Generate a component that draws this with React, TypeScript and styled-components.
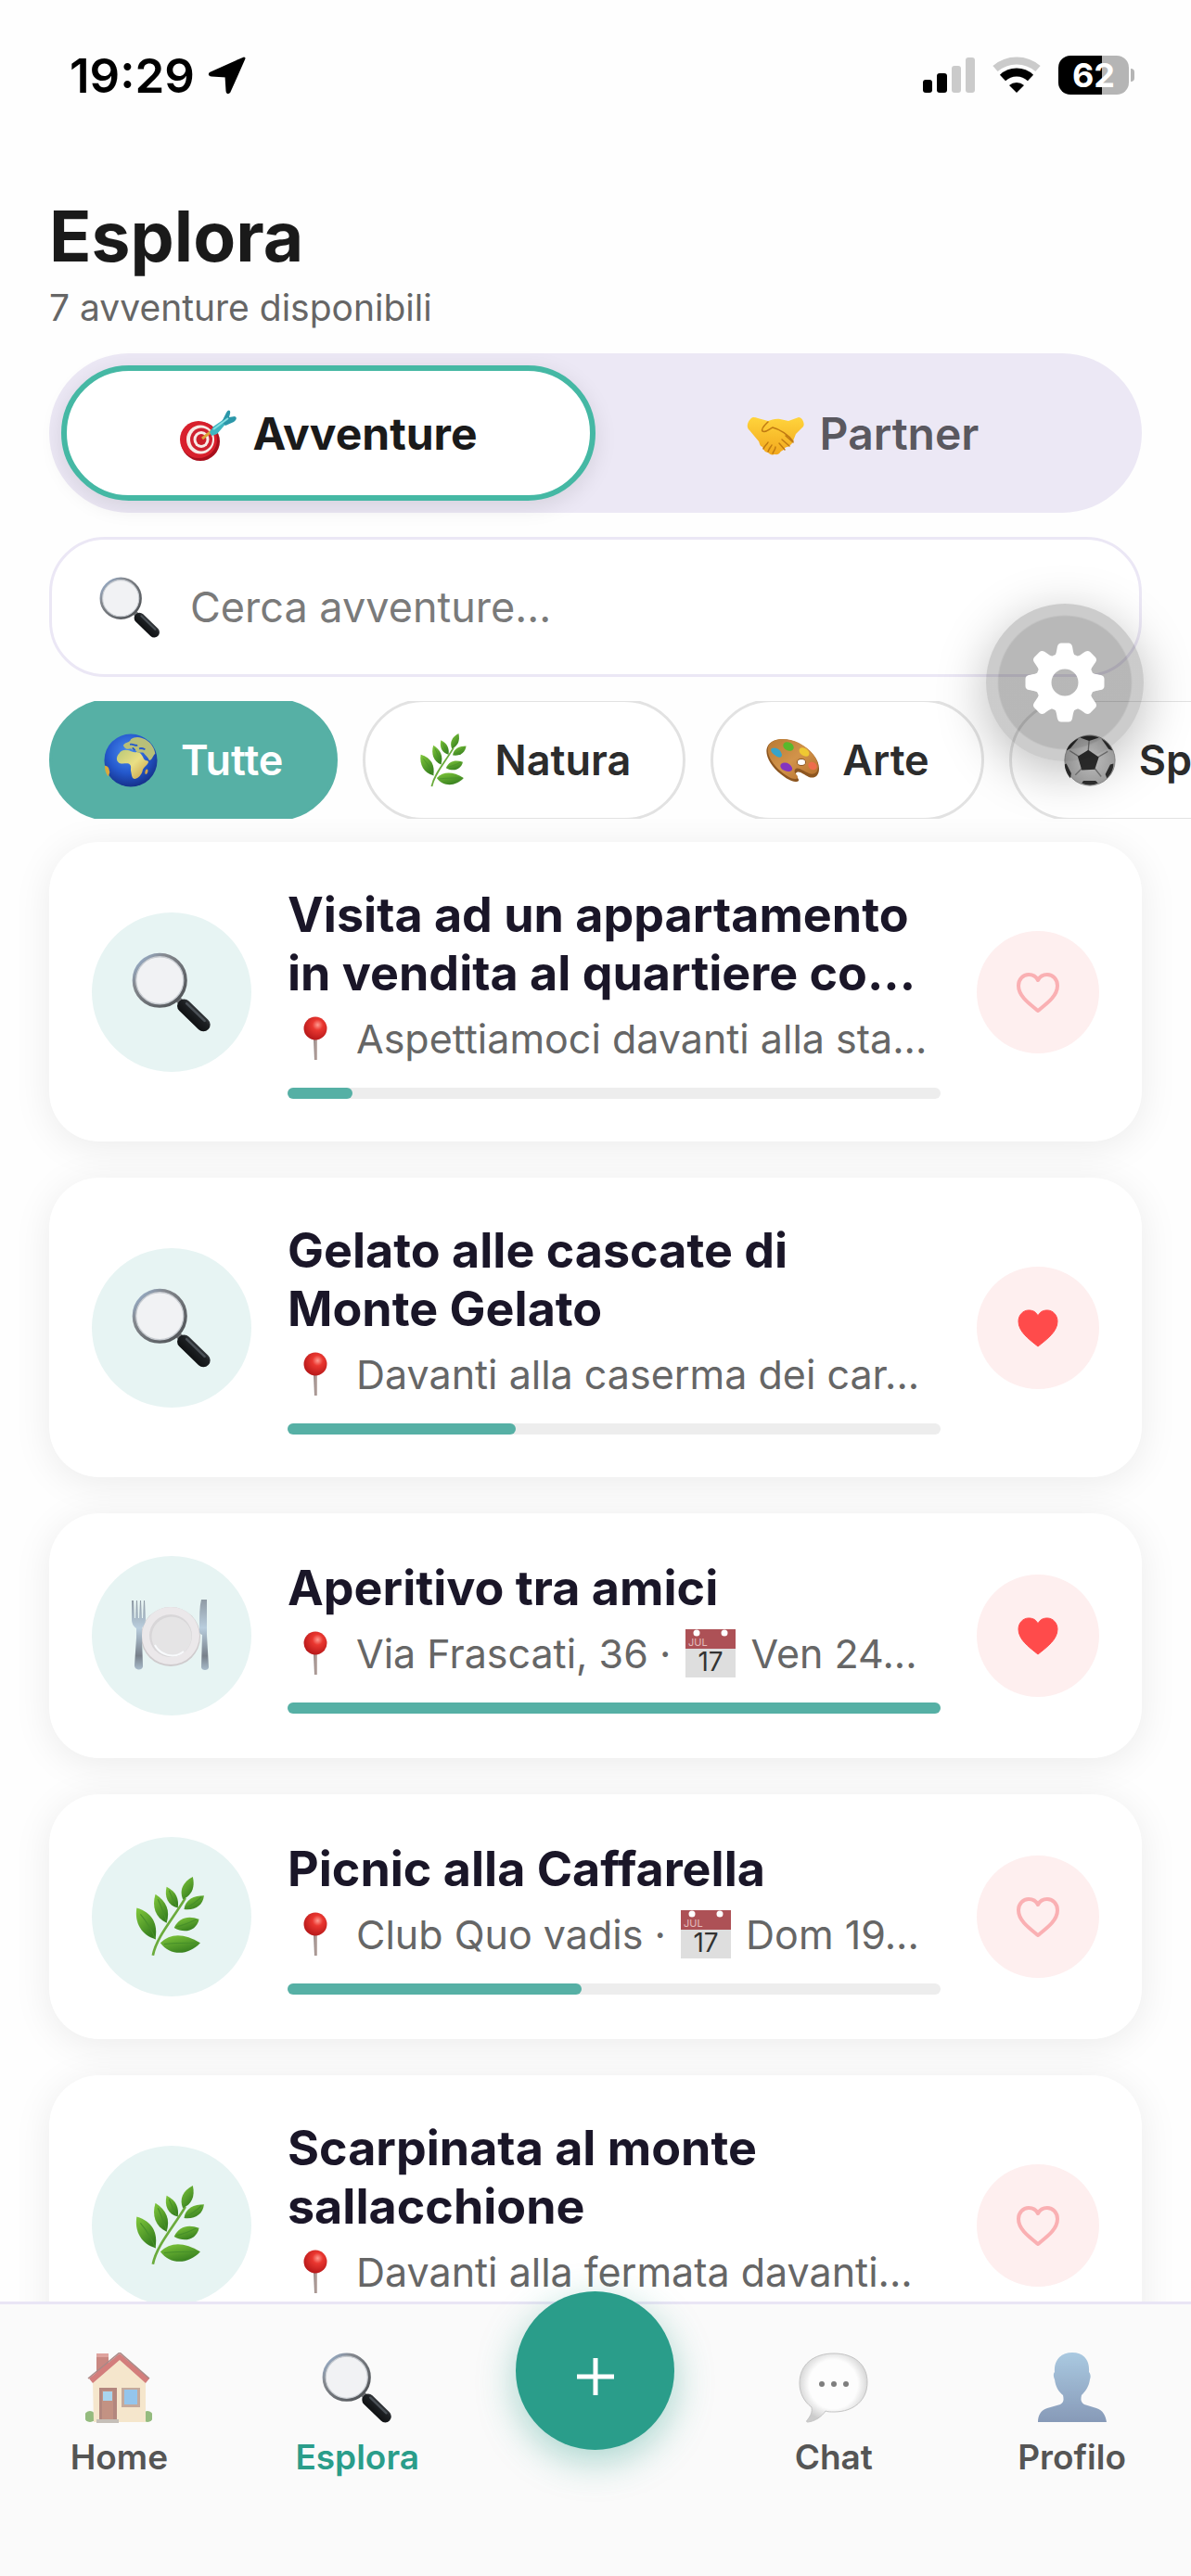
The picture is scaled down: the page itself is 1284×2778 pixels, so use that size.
import { ReactNode, useState } from 'react'
import styled, { createGlobalStyle, css } from 'styled-components'

const GlobalStyle = createGlobalStyle`
  * {
    box-sizing: border-box;
  }

  body {
    margin: 0;
    background: #fefefe;
    font-family: Inter, 'Liberation Sans', sans-serif;
  }

  h1, h2, p, ul {
    margin: 0;
    padding: 0;
  }

  button, input {
    font: inherit;
    color: inherit;
    border: none;
    background: none;
    padding: 0;
  }
`

const Screen = styled.div`
  display: flex;
  flex-direction: column;
  height: 100vh;
  overflow: hidden;
`

const StatusBar = styled.div`
  display: flex;
  align-items: center;
  justify-content: space-between;
  height: 112px;
  padding: 50px 61px 0 75px;
`

const StatusGroup = styled.div<{ $gap: number }>`
  display: flex;
  align-items: center;
  gap: ${({ $gap }) => $gap}px;
`

const Clock = styled.span`
  font-size: 51px;
  font-weight: 600;
  color: #000;
`

const Battery = styled.span`
  display: flex;
  align-items: center;
  justify-content: center;
  width: 76px;
  height: 42px;
  border-radius: 13px;
  background: linear-gradient(90deg, #000 62%, #b5b5b5 62%);
  color: #fff;
  font-size: 36px;
  font-weight: 700;
  line-height: 42px;
`

const BatteryWrap = styled.div`
  display: flex;
  align-items: center;
  gap: 2px;

  &::after {
    content: '';
    width: 4px;
    height: 14px;
    border-radius: 0 4px 4px 0;
    background: #b5b5b5;
  }
`

const Header = styled.header`
  display: flex;
  flex-direction: column;
  padding: 95px 53px 0;
`

const Title = styled.h1`
  font-size: 75px;
  font-weight: 700;
  line-height: 96px;
  color: #1a1a1a;
`

const Subtitle = styled.p`
  margin-top: 4px;
  font-size: 39px;
  line-height: 50px;
  color: #666;
`

const Segment = styled.div`
  display: grid;
  grid-template-columns: 1fr 1fr;
  margin-top: 24px;
  padding: 13px;
  border-radius: 86px;
  background: #ece8f5;
`

const SegmentTab = styled.button<{ $active: boolean }>`
  display: flex;
  align-items: center;
  justify-content: center;
  gap: 17px;
  height: 146px;
  border: 6px solid transparent;
  border-radius: 73px;
  color: #5a585f;
  font-size: 48px;
  font-weight: 600;

  ${({ $active }) =>
    $active &&
    css`
      border-color: #45b8a4;
      background: #fff;
      box-shadow: 0 6px 24px rgba(0, 0, 0, 0.1);
      color: #1a1a1a;
      font-weight: 700;
    `}
`

const SearchBox = styled.label`
  display: flex;
  align-items: center;
  gap: 32px;
  height: 151px;
  margin-top: 26px;
  padding: 0 51px;
  border: 3px solid #ebe7f5;
  border-radius: 60px;
  background: #fff;
`

const SearchInput = styled.input`
  flex: 1;
  min-width: 0;
  font-size: 45px;
  outline: none;
  color: #1a1a1a;

  &::placeholder {
    color: #7a7a7a;
    opacity: 1;
  }
`

const Filters = styled.div`
  position: relative;
  margin-top: 26px;
`

const ChipRow = styled.div`
  display: flex;
  align-items: center;
  gap: 27px;
  height: 127px;
  padding-left: 53px;
  overflow: hidden;
`

const Chip = styled.button<{ $active: boolean }>`
  display: flex;
  flex-shrink: 0;
  align-items: center;
  gap: 25px;
  height: 131px;
  padding: 0 56px;
  border: 3px solid ${({ $active }) => ($active ? '#56b0a5' : '#e2e2e2')};
  border-radius: 66px;
  background: ${({ $active }) => ($active ? '#56b0a5' : '#fff')};
  color: ${({ $active }) => ($active ? '#fff' : '#2c2c2c')};
  font-size: 45px;
  font-weight: 600;
`

/* floats over the search box and the filters */
const SettingsButton = styled.button`
  position: absolute;
  top: -105px;
  right: 51px;
  display: flex;
  align-items: center;
  justify-content: center;
  width: 170px;
  height: 170px;
  border-radius: 50%;
  background: radial-gradient(circle, rgba(0, 0, 0, 0.28) 71px, rgba(0, 0, 0, 0.2) 73px);
  box-shadow: 0 12px 54px rgba(0, 0, 0, 0.26);
`

const List = styled.ul`
  display: flex;
  flex: 1;
  flex-direction: column;
  gap: 39px;
  min-height: 0;
  padding: 25px 53px 40px;
  overflow-y: auto;
  list-style: none;
  scrollbar-width: none;
`

const Card = styled.li`
  display: flex;
  flex-shrink: 0;
  align-items: center;
  gap: 39px;
  padding: 46px;
  border-radius: 54px;
  background: #fff;
  box-shadow: 0 6px 42px rgba(0, 0, 0, 0.08);
`

const CardIcon = styled.div`
  display: flex;
  flex-shrink: 0;
  align-items: center;
  justify-content: center;
  width: 172px;
  height: 172px;
  border-radius: 50%;
  background: #e7f4f3;
`

const CardBody = styled.div`
  flex: 1;
  min-width: 0;
  padding-top: 1px;
`

const CardTitle = styled.h2`
  font-size: 52px;
  font-weight: 700;
  line-height: 63px;
  color: #1a1628;
  white-space: pre-line;
`

const CardPlace = styled.p`
  height: 57px;
  margin-top: 11px;
  font-size: 43px;
  line-height: 57px;
  color: #666;
  white-space: nowrap;
`

const PinSvg = styled.svg`
  margin: 0 31px 0 17px;
  vertical-align: -8px;
`

const CalendarSvg = styled.svg`
  margin: 0 4px;
  vertical-align: -10px;
`

const Track = styled.div`
  height: 12px;
  margin-top: 24px;
  border-radius: 6px;
  background: #ededed;
`

const Fill = styled.div`
  height: 100%;
  border-radius: 6px;
  background: #56b0a5;
`

const HeartButton = styled.button`
  display: flex;
  flex-shrink: 0;
  align-items: center;
  justify-content: center;
  width: 132px;
  height: 132px;
  border-radius: 50%;
  background: #feefef;
`

const Nav = styled.nav`
  position: relative;
  display: grid;
  grid-template-columns: repeat(5, 1fr);
  height: 296px;
  border-top: 3px solid #e9e5f5;
  background: #fafafa;
`

const NavLink = styled.a<{ $active?: boolean }>`
  display: flex;
  flex-direction: column;
  align-items: center;
  gap: 14px;
  padding-top: 52px;
  color: ${({ $active }) => ($active ? '#2a9d8a' : '#555')};
  font-size: 37px;
  font-weight: 600;
  line-height: 46px;
  text-decoration: none;

  svg {
    opacity: ${({ $active }) => ($active ? 1 : 0.65)};
  }
`

const AddButton = styled.button`
  display: flex;
  align-items: center;
  justify-content: center;
  justify-self: center;
  width: 171px;
  height: 171px;
  margin-top: -14px;
  padding-top: 12px;
  border-radius: 50%;
  background: #2a9d8a;
  box-shadow: 0 12px 42px rgba(42, 157, 138, 0.4);
`

const HiddenSvg = styled.svg`
  position: absolute;
`

/* shared gradients for the pictograms */
function Gradients() {
  return (
    <HiddenSvg width="0" height="0" aria-hidden="true">
      <defs>
        <linearGradient id="lens" x1="0" y1="0" x2="1" y2="1">
          <stop offset="0" stopColor="#9db9dc" />
          <stop offset="0.3" stopColor="#85898f" />
          <stop offset="1" stopColor="#4a4d50" />
        </linearGradient>
        <linearGradient id="handle" x1="1" y1="0" x2="0" y2="1">
          <stop offset="0" stopColor="#5a5e62" />
          <stop offset="0.4" stopColor="#1d2023" />
          <stop offset="1" stopColor="#060708" />
        </linearGradient>
        <radialGradient id="sea" cx="0.45" cy="0.35" r="0.65">
          <stop offset="0" stopColor="#4a8cf0" />
          <stop offset="0.6" stopColor="#2458cc" />
          <stop offset="1" stopColor="#16328c" />
        </radialGradient>
        <linearGradient id="land" x1="0" y1="0" x2="1" y2="1">
          <stop offset="0" stopColor="#b9c878" />
          <stop offset="0.5" stopColor="#eadf84" />
          <stop offset="1" stopColor="#c79b45" />
        </linearGradient>
        <linearGradient id="leaf" x1="0" y1="0" x2="0.6" y2="1">
          <stop offset="0" stopColor="#82c93c" />
          <stop offset="1" stopColor="#37801f" />
        </linearGradient>
        <radialGradient id="pinHead" cx="0.6" cy="0.35" r="0.65">
          <stop offset="0" stopColor="#ff9a90" />
          <stop offset="0.35" stopColor="#ea3730" />
          <stop offset="1" stopColor="#b8191a" />
        </radialGradient>
        <linearGradient id="pinStick" x1="0" y1="0" x2="1" y2="0">
          <stop offset="0" stopColor="#8c7b78" />
          <stop offset="1" stopColor="#c4b4b0" />
        </linearGradient>
        <linearGradient id="wood" x1="0" y1="0" x2="1" y2="1">
          <stop offset="0" stopColor="#b87a34" />
          <stop offset="0.5" stopColor="#d2934a" />
          <stop offset="1" stopColor="#b36e2b" />
        </linearGradient>
        <linearGradient id="hand" x1="0" y1="0" x2="0" y2="1">
          <stop offset="0" stopColor="#ffd43c" />
          <stop offset="1" stopColor="#f2a81d" />
        </linearGradient>
        <radialGradient id="ball" cx="0.5" cy="0.4" r="0.6">
          <stop offset="0" stopColor="#e2e2e2" />
          <stop offset="1" stopColor="#a2a2a2" />
        </radialGradient>
        <linearGradient id="steel" x1="0" y1="0" x2="0" y2="1">
          <stop offset="0" stopColor="#8f9aa4" />
          <stop offset="0.4" stopColor="#b9cddd" />
          <stop offset="0.8" stopColor="#77808a" />
          <stop offset="1" stopColor="#a9bccb" />
        </linearGradient>
        <linearGradient id="bust" x1="0" y1="0" x2="0" y2="1">
          <stop offset="0" stopColor="#80b0d4" />
          <stop offset="1" stopColor="#4a6795" />
        </linearGradient>
        <radialGradient id="bubble" cx="0.5" cy="0.45" r="0.55">
          <stop offset="0.65" stopColor="#ffffff" />
          <stop offset="1" stopColor="#b4b4b4" />
        </radialGradient>
      </defs>
    </HiddenSvg>
  )
}

function Magnifier({ size }: { size: number }) {
  return (
    <svg width={size} height={size} viewBox="0 0 64 64" aria-hidden="true">
      <path d="M37 37.500 41 41.500" stroke="#77797c" strokeWidth="5" />
      <path d="M42 43 57.500 58" stroke="url(#handle)" strokeWidth="11" strokeLinecap="round" />
      <path d="M44 41 58.500 55" stroke="#4b5157" strokeWidth="2" strokeLinecap="round" />
      <circle cx="22.500" cy="22.500" r="20.500" fill="#f1f2f4" stroke="url(#lens)" strokeWidth="3" />
      <circle cx="22.500" cy="22.500" r="19" fill="none" stroke="#c9cdd2" strokeWidth="1" />
    </svg>
  )
}

function Herb({ size }: { size: number }) {
  return (
    <svg width={size} height={size} viewBox="0 0 64 64" fill="url(#leaf)" aria-hidden="true">
      <path d="M17 63C20 48 33 34 43 17" fill="none" stroke="#6bab3c" strokeWidth="2" />
      <path d="M49 0c2 9-1 15-8 18-3-7 0-14 8-18Z" />
      <path d="M28 8c8 4 10 10 9 17-8-2-11-9-9-17Z" />
      <path d="M58 15c-1 8-7 12-16 11 1-8 8-11 16-11Z" />
      <path d="M19 14c9 6 12 13 9 23-9-4-12-13-9-23Z" />
      <path d="M34 41c4-9 12-10 20-7-2 9-11 12-20 7Z" />
      <path d="M4 25c13 4 17 13 15 25C8 47 2 37 4 25Z" />
      <path d="M23 53c8-8 19-8 32 0-9 10-24 11-32 0Z" />
      <path d="M7 30c5 6 9 12 12 20M26 54c8-1 18-1 26-1M21 18c3 6 5 12 7 18M36 40c5-1 10-3 16-6M30 11c2 5 4 9 6 13M43 25c5-2 9-5 13-9" fill="none" stroke="#47902a" strokeWidth="0.800" />
    </svg>
  )
}

function Globe() {
  return (
    <svg width="58" height="58" viewBox="0 0 64 64" aria-hidden="true">
      <circle cx="32" cy="32" r="31.500" fill="url(#sea)" />
      <path
        d="M18 24c2-5 8-5 12-4 3 1 5 3 9 2 5 0 7 5 9 9 2 2 5 1 5 3-1 4-6 6-7 10-1 5-5 9-9 10-4 0-4-6-5-10 0-4 1-6-2-8-4-1-8 1-12-1-4-3-3-8 0-11Z"
        fill="url(#land)"
      />
      <path d="M23 14c3-4 8-3 9-7 5-4 12-3 17 0 7 4 11 10 12 17-3 3-4 8-7 8-2-4-4-5-7-9-3-1-5 1-8-1 0-3-5-1-7-4-3 1-7 1-9-4Z" fill="#b8bf79" />
      <path d="M31 13c4-1 6 2 9 1M34 17l3 3M42 18c3-1 5 0 7 1" fill="none" stroke="#2458cc" strokeWidth="2" />
      <path d="M1 38c5 1 5 4 6 8-1 3-1 4-2 5-3-4-4-8-4-13Z" fill="#d9a93d" />
      <path d="M50 43c3-2 3 3 1 5-2 2-3-2-1-5Z" fill="#d3a44a" />
    </svg>
  )
}

function Palette() {
  return (
    <svg width="58" height="46" viewBox="0 0 58 46" aria-hidden="true">
      <path
        d="M3 7C9-2 25-1 37 5c13 7 21 17 21 27 0 8-5 11-11 9-6-3-11-8-14-4-2 3 4 5 3 8-3 3-12-1-19-7C5 29-2 15 3 7Z"
        fill="#8d5620"
      />
      <path
        d="M4 6C10-2 25-1 36 4c13 7 20 16 21 25 0 8-5 10-10 8-7-3-12-8-15-4-2 4 4 6 3 9-3 3-11-1-18-7C6 26 0 14 4 6Z"
        fill="url(#wood)"
      />
      <ellipse cx="39" cy="25" rx="4.500" ry="3.500" fill="#fff" stroke="#8d5620" />
      <path d="M7 10c4-2 10 1 11 7 0 4-5 3-8 0-3-2-5-5-3-7Z" fill="#37a4c9" />
      <ellipse cx="25" cy="8" rx="6" ry="4.500" fill="#58b82c" transform="rotate(25 25 8)" />
      <ellipse cx="42" cy="14" rx="6" ry="4" fill="#efc832" transform="rotate(35 42 14)" />
      <ellipse cx="51" cy="29" rx="5" ry="4" fill="#ee6d4b" transform="rotate(35 51 29)" />
      <path d="M17 27c4-3 10-1 12 4 1 4-4 5-8 3-3-1-6-4-4-7Z" fill="#8434c0" />
    </svg>
  )
}

function SoccerBall() {
  return (
    <svg width="56" height="56" viewBox="0 0 64 64" aria-hidden="true">
      <circle cx="32" cy="32" r="31" fill="url(#ball)" stroke="#8d8d8d" />
      <g stroke="#777" strokeWidth="1.500" fill="none">
        <path d="M30 20 31 8M42 28 54 21M38 42 46 52M22 42 14 50M18 27 7 20" />
      </g>
      <g fill="#2f2f2f">
        <path d="m30 19 13 9-5 15-16 1-5-17Z" />
        <path d="M20 4c7-3 16-3 23 0l-12 4ZM46 5c6 3 11 8 14 15l-5-2ZM18 5C10 8 5 14 3 20l5-3ZM61 36c0 7-3 13-8 18l-2-5 6-12ZM3 36l6 12-1 6C4 49 1 43 1 37ZM24 57h15l3 3c-6 3-14 3-20 0Z" />
      </g>
    </svg>
  )
}

function Dart() {
  return (
    <svg width="62" height="60" viewBox="0 0 62 60" aria-hidden="true">
      <ellipse cx="23" cy="39" rx="21" ry="21" fill="#a80f1c" />
      <ellipse cx="21" cy="37" rx="20" ry="20" fill="#d8202c" />
      <ellipse cx="23" cy="37" rx="15" ry="15.500" fill="#f7ece7" />
      <ellipse cx="24" cy="37" rx="12" ry="12.500" fill="#cf2230" />
      <ellipse cx="24" cy="37" rx="8.500" ry="9" fill="#f7ece7" />
      <ellipse cx="24" cy="37" rx="5.500" ry="6" fill="#cb1f2a" />
      <path d="m25 36 10-8" stroke="#dca43a" strokeWidth="3" />
      <path d="m33 29 4-6 13-9 3 3-12 14-6 2Z" fill="#3fb5c0" />
      <path d="m46 18 5-10c2-4 5-3 4 1l-1 4 6-1c3 1 2 4-1 6l-9 4Z" fill="#2b97a9" />
      <path d="m37 26 16-12" stroke="#84e0e2" strokeWidth="2" />
    </svg>
  )
}

function Handshake() {
  return (
    <svg width="62" height="54" viewBox="0 0 62 54" aria-hidden="true">
      <path
        d="M4 12c2-3 5-2 8-1l11 3c4-1 8-3 13-2l9 2 11-4c4 0 7 7 5 10l-8 8-4 10c-3 4-6 4-8 5-1 3-4 3-5 5-2 3-5 2-6 2-3 1-5 0-7-2-3 0-5-3-6-6-3-1-3-4-4-6L3 24c-4-3-2-9 1-12Z"
        fill="url(#hand)"
      />
      <path
        d="M23 15c-3 3-8 7-6 10 4 2 8-3 11-4 8 2 17 8 22 15M18 44c1-3 4-5 5-7M23 47c1-3 3-5 4-7M28 49c1-3 3-4 3-7M35 38l6 7M38 34l8 7M42 30l8 7"
        fill="none"
        stroke="#c07a12"
        strokeWidth="1.500"
        strokeLinecap="round"
      />
    </svg>
  )
}

function PlateSetting() {
  return (
    <svg width="86" height="78" viewBox="1 0 86 78" aria-hidden="true">
      <circle cx="43" cy="40" r="32" fill="#cfcbcd" />
      <circle cx="43" cy="39" r="31" fill="#ebe8ea" />
      <circle cx="43" cy="39" r="23" fill="#d8d6d8" />
      <circle cx="44" cy="40" r="21.500" fill="#e5e4e5" />
      <path d="M26 49c5 10 20 16 31 7" fill="none" stroke="#f8fafc" strokeWidth="2" />
      <path
        d="M1 1h2l1 19h1L6 1h1l1 19h1l1-19h1l1 19h1l1-19h1l1 20c0 5-3 8-4 10v10l1 30c1 6-9 6-9 0l2-30V31c-3-2-5-5-5-10Z"
        fill="url(#steel)"
      />
      <path d="M76 0h6v38l2 35c0 4-8 4-8 0l1-35c-4-1-3-4-3-10 0-10 0-20 2-28Z" fill="url(#steel)" />
    </svg>
  )
}

function House() {
  return (
    <svg width="72" height="76" viewBox="0 0 72 76" aria-hidden="true">
      <circle cx="5" cy="69" r="6" fill="#5f9a3c" />
      <circle cx="67" cy="69" r="6" fill="#5f9a3c" />
      <path d="M12 1h13v24H12Z" fill="#b04a42" />
      <path d="M12 1h13v4H12Z" fill="#d1756d" />
      <path d="M8 31 37 3l28 28v44H9Z" fill="#f3dcb4" />
      <path d="m4 28 33-27 32 27-4 5L37 8 8 33Z" fill="#bf3c3a" />
      <path d="M3 28 37 0l32 28" fill="none" stroke="#7f4d49" strokeWidth="1.500" />
      <path d="M15 38h19v35H15Z" fill="#8e4a3c" />
      <path d="M18 41h12v32H18Z" fill="#a65b44" />
      <path d="M19 42h10v10H19Z" fill="#7fc2e8" />
      <path d="M39 38h20v21H39Z" fill="#a8806a" />
      <path d="M42 40h14v16H42Z" fill="#5fa9e6" />
      <path d="M12 72h24v4H12Z" fill="#aaa196" />
    </svg>
  )
}

function ChatBubble() {
  return (
    <svg width="76" height="76" viewBox="0 0 76 76" aria-hidden="true">
      <path
        d="M38 1c22 0 36 12 36 31S60 64 38 64c-3 0-7 0-9-1-4 6-11 11-19 12-2 0-2-1 0-3 3-4 5-8 4-13C6 53 1 44 1 33 1 13 16 1 38 1Z"
        fill="url(#bubble)"
        stroke="#a8a8a8"
      />
      <g fill="#3d3d3d">
        <circle cx="25" cy="34" r="3" />
        <circle cx="38" cy="34" r="3" />
        <circle cx="51" cy="34" r="3" />
      </g>
    </svg>
  )
}

function Bust() {
  return (
    <svg width="76" height="76" viewBox="0 0 76 76" aria-hidden="true">
      <path
        d="M38 0c12 0 19 8 18 21 2 2 2 6 1 8-1 8-5 13-9 17-1 5-1 7 3 10l13 4c7 2 10 8 11 15H1c0-7 3-13 10-15l14-4c4-2 4-5 3-10-5-4-8-9-9-17-1-2-2-6 0-8C18 8 26 0 38 0Z"
        fill="url(#bust)"
      />
    </svg>
  )
}

function Pin() {
  return (
    <PinSvg width="26" height="48" viewBox="0 0 26 48" aria-hidden="true">
      <path d="M11 23h4v24h-3Z" fill="url(#pinStick)" />
      <circle cx="13" cy="13" r="12.500" fill="url(#pinHead)" />
    </PinSvg>
  )
}

function Calendar() {
  return (
    <CalendarSvg width="54" height="52" viewBox="0 0 54 52" aria-hidden="true">
      <rect width="54" height="52" fill="#dedede" />
      <rect width="54" height="21" fill="#ad5156" />
      <circle cx="12" cy="4" r="3.500" fill="#fff" />
      <circle cx="42" cy="4" r="3.500" fill="#fff" />
      <text x="3" y="18" fontSize="11" fill="#e4bcbc">JUL</text>
      <text x="27" y="45" fontSize="28" fontWeight="400" textAnchor="middle" fill="#333">17</text>
    </CalendarSvg>
  )
}

function Heart({ filled }: { filled: boolean }) {
  return (
    <svg width="48" height="44" viewBox="0 0 48 44" aria-hidden="true">
      <path
        d="M24 42C14 34 3 26 3 15 3 8 8 3 14 3c5 0 8 2 10 6 2-4 5-6 10-6 6 0 11 5 11 12 0 11-11 19-21 27Z"
        fill={filled ? '#ff4b4b' : 'none'}
        stroke={filled ? '#ff4b4b' : '#fab0b3'}
        strokeWidth={filled ? 1 : 4}
        strokeLinejoin="round"
      />
    </svg>
  )
}

const teeth = [0, 45, 90, 135, 180, 225, 270, 315]

function Gear() {
  return (
    <svg width="86" height="86" viewBox="-43 -43 86 86" aria-hidden="true">
      <circle r="23" fill="none" stroke="#fff" strokeWidth="17" />
      {teeth.map((angle) => (
        <path
          key={angle}
          d="M-13 -26C-9 -30 -9 -34 -8 -39Q-7 -42.500 -4 -42.500H4Q7 -42.500 8 -39C9 -34 9 -30 13 -26Z"
          fill="#fff"
          transform={`rotate(${angle})`}
        />
      ))}
    </svg>
  )
}

interface IAdventure {
  id: number
  icon: ReactNode
  title: string
  place: string
  date?: string
  progress: number
  liked: boolean
}

const adventures: IAdventure[] = [
  {
    id: 1,
    icon: <Magnifier size={86} />,
    title: 'Visita ad un appartamento\nin vendita al quartiere co...',
    place: 'Aspettiamoci davanti alla sta...',
    progress: 10,
    liked: false,
  },
  {
    id: 2,
    icon: <Magnifier size={86} />,
    title: 'Gelato alle cascate di\nMonte Gelato',
    place: 'Davanti alla caserma dei car...',
    progress: 35,
    liked: true,
  },
  {
    id: 3,
    icon: <PlateSetting />,
    title: 'Aperitivo tra amici',
    place: 'Via Frascati, 36 ·',
    date: 'Ven 24...',
    progress: 100,
    liked: true,
  },
  {
    id: 4,
    icon: <Herb size={86} />,
    title: 'Picnic alla Caffarella',
    place: 'Club Quo vadis ·',
    date: 'Dom 19...',
    progress: 45,
    liked: false,
  },
  {
    id: 5,
    icon: <Herb size={86} />,
    title: 'Scarpinata al monte\nsallacchione',
    place: 'Davanti alla fermata davanti...',
    progress: 30,
    liked: false,
  },
]

const categories = [
  { label: 'Tutte', icon: <Globe /> },
  { label: 'Natura', icon: <Herb size={58} /> },
  { label: 'Arte', icon: <Palette /> },
  { label: 'Sport', icon: <SoccerBall /> },
]

function AdventureCard({ adventure }: { adventure: IAdventure }) {
  const [liked, setLiked] = useState(adventure.liked)

  return (
    <Card>
      <CardIcon>{adventure.icon}</CardIcon>
      <CardBody>
        <CardTitle>{adventure.title}</CardTitle>
        <CardPlace>
          <Pin />
          {adventure.place}
          {adventure.date && (
            <>
              {' '}
              <Calendar /> {adventure.date}
            </>
          )}
        </CardPlace>
        <Track role="progressbar" aria-valuenow={adventure.progress} aria-label="Posti occupati">
          <Fill style={{ width: `${adventure.progress}%` }} />
        </Track>
      </CardBody>
      <HeartButton aria-label="Preferito" aria-pressed={liked} onClick={() => setLiked(!liked)}>
        <Heart filled={liked} />
      </HeartButton>
    </Card>
  )
}

function App() {
  const [tab, setTab] = useState('Avventure')
  const [category, setCategory] = useState('Tutte')

  return (
    <Screen>
      <GlobalStyle />
      <Gradients />
      <StatusBar>
        <StatusGroup $gap={14}>
          <Clock>19:29</Clock>
          <svg width="42" height="42" viewBox="0 0 42 42" aria-hidden="true">
            <path d="M39 3 3 19c-1 1-1 2 1 2l16 1 1 16c0 2 1 2 2 1Z" stroke="#000" strokeWidth="3" strokeLinejoin="round" />
          </svg>
        </StatusGroup>
        <StatusGroup $gap={19}>
          <svg width="56" height="38" viewBox="0 0 56 38" aria-hidden="true">
            <rect y="24" width="10" height="14" rx="3" />
            <rect x="15" y="17" width="11" height="21" rx="3" />
            <rect x="31" y="9" width="10" height="29" rx="3" fill="#cbcbcb" />
            <rect x="46" width="10" height="38" rx="3" fill="#cbcbcb" />
          </svg>
          <svg width="52" height="40" viewBox="0 0 52 40" fill="none" aria-hidden="true">
            <path d="M3 13a35 35 0 0 1 46 0" stroke="#cbcbcb" strokeWidth="8" />
            <path d="M11 23a22 22 0 0 1 30 0" stroke="#000" strokeWidth="9" />
            <path d="M18 31a12 12 0 0 1 16 0l-8 8Z" fill="#000" />
          </svg>
          <BatteryWrap>
            <Battery>62</Battery>
          </BatteryWrap>
        </StatusGroup>
      </StatusBar>

      <Header>
        <Title>Esplora</Title>
        <Subtitle>7 avventure disponibili</Subtitle>
        <Segment role="tablist">
          <SegmentTab role="tab" aria-selected={tab === 'Avventure'} $active={tab === 'Avventure'} onClick={() => setTab('Avventure')}>
            <Dart />
            Avventure
          </SegmentTab>
          <SegmentTab role="tab" aria-selected={tab === 'Partner'} $active={tab === 'Partner'} onClick={() => setTab('Partner')}>
            <Handshake />
            Partner
          </SegmentTab>
        </Segment>
        <SearchBox>
          <Magnifier size={66} />
          <SearchInput type="text" placeholder="Cerca avventure..." aria-label="Cerca avventure" />
        </SearchBox>
      </Header>

      <Filters>
        <ChipRow>
          {categories.map(({ label, icon }) => (
            <Chip key={label} $active={category === label} onClick={() => setCategory(label)}>
              {icon}
              {label}
            </Chip>
          ))}
        </ChipRow>
        <SettingsButton aria-label="Impostazioni">
          <Gear />
        </SettingsButton>
      </Filters>

      <List>
        {adventures.map((adventure) => (
          <AdventureCard key={adventure.id} adventure={adventure} />
        ))}
      </List>

      <Nav>
        <NavLink href="#home">
          <House />
          Home
        </NavLink>
        <NavLink href="#esplora" $active>
          <Magnifier size={76} />
          Esplora
        </NavLink>
        <AddButton aria-label="Nuova avventura">
          <svg width="42" height="42" viewBox="0 0 42 42" aria-hidden="true">
            <path d="M21 1v40M1 21h40" stroke="#fff" strokeWidth="5" />
          </svg>
        </AddButton>
        <NavLink href="#chat">
          <ChatBubble />
          Chat
        </NavLink>
        <NavLink href="#profilo">
          <Bust />
          Profilo
        </NavLink>
      </Nav>
    </Screen>
  )
}

export default App
